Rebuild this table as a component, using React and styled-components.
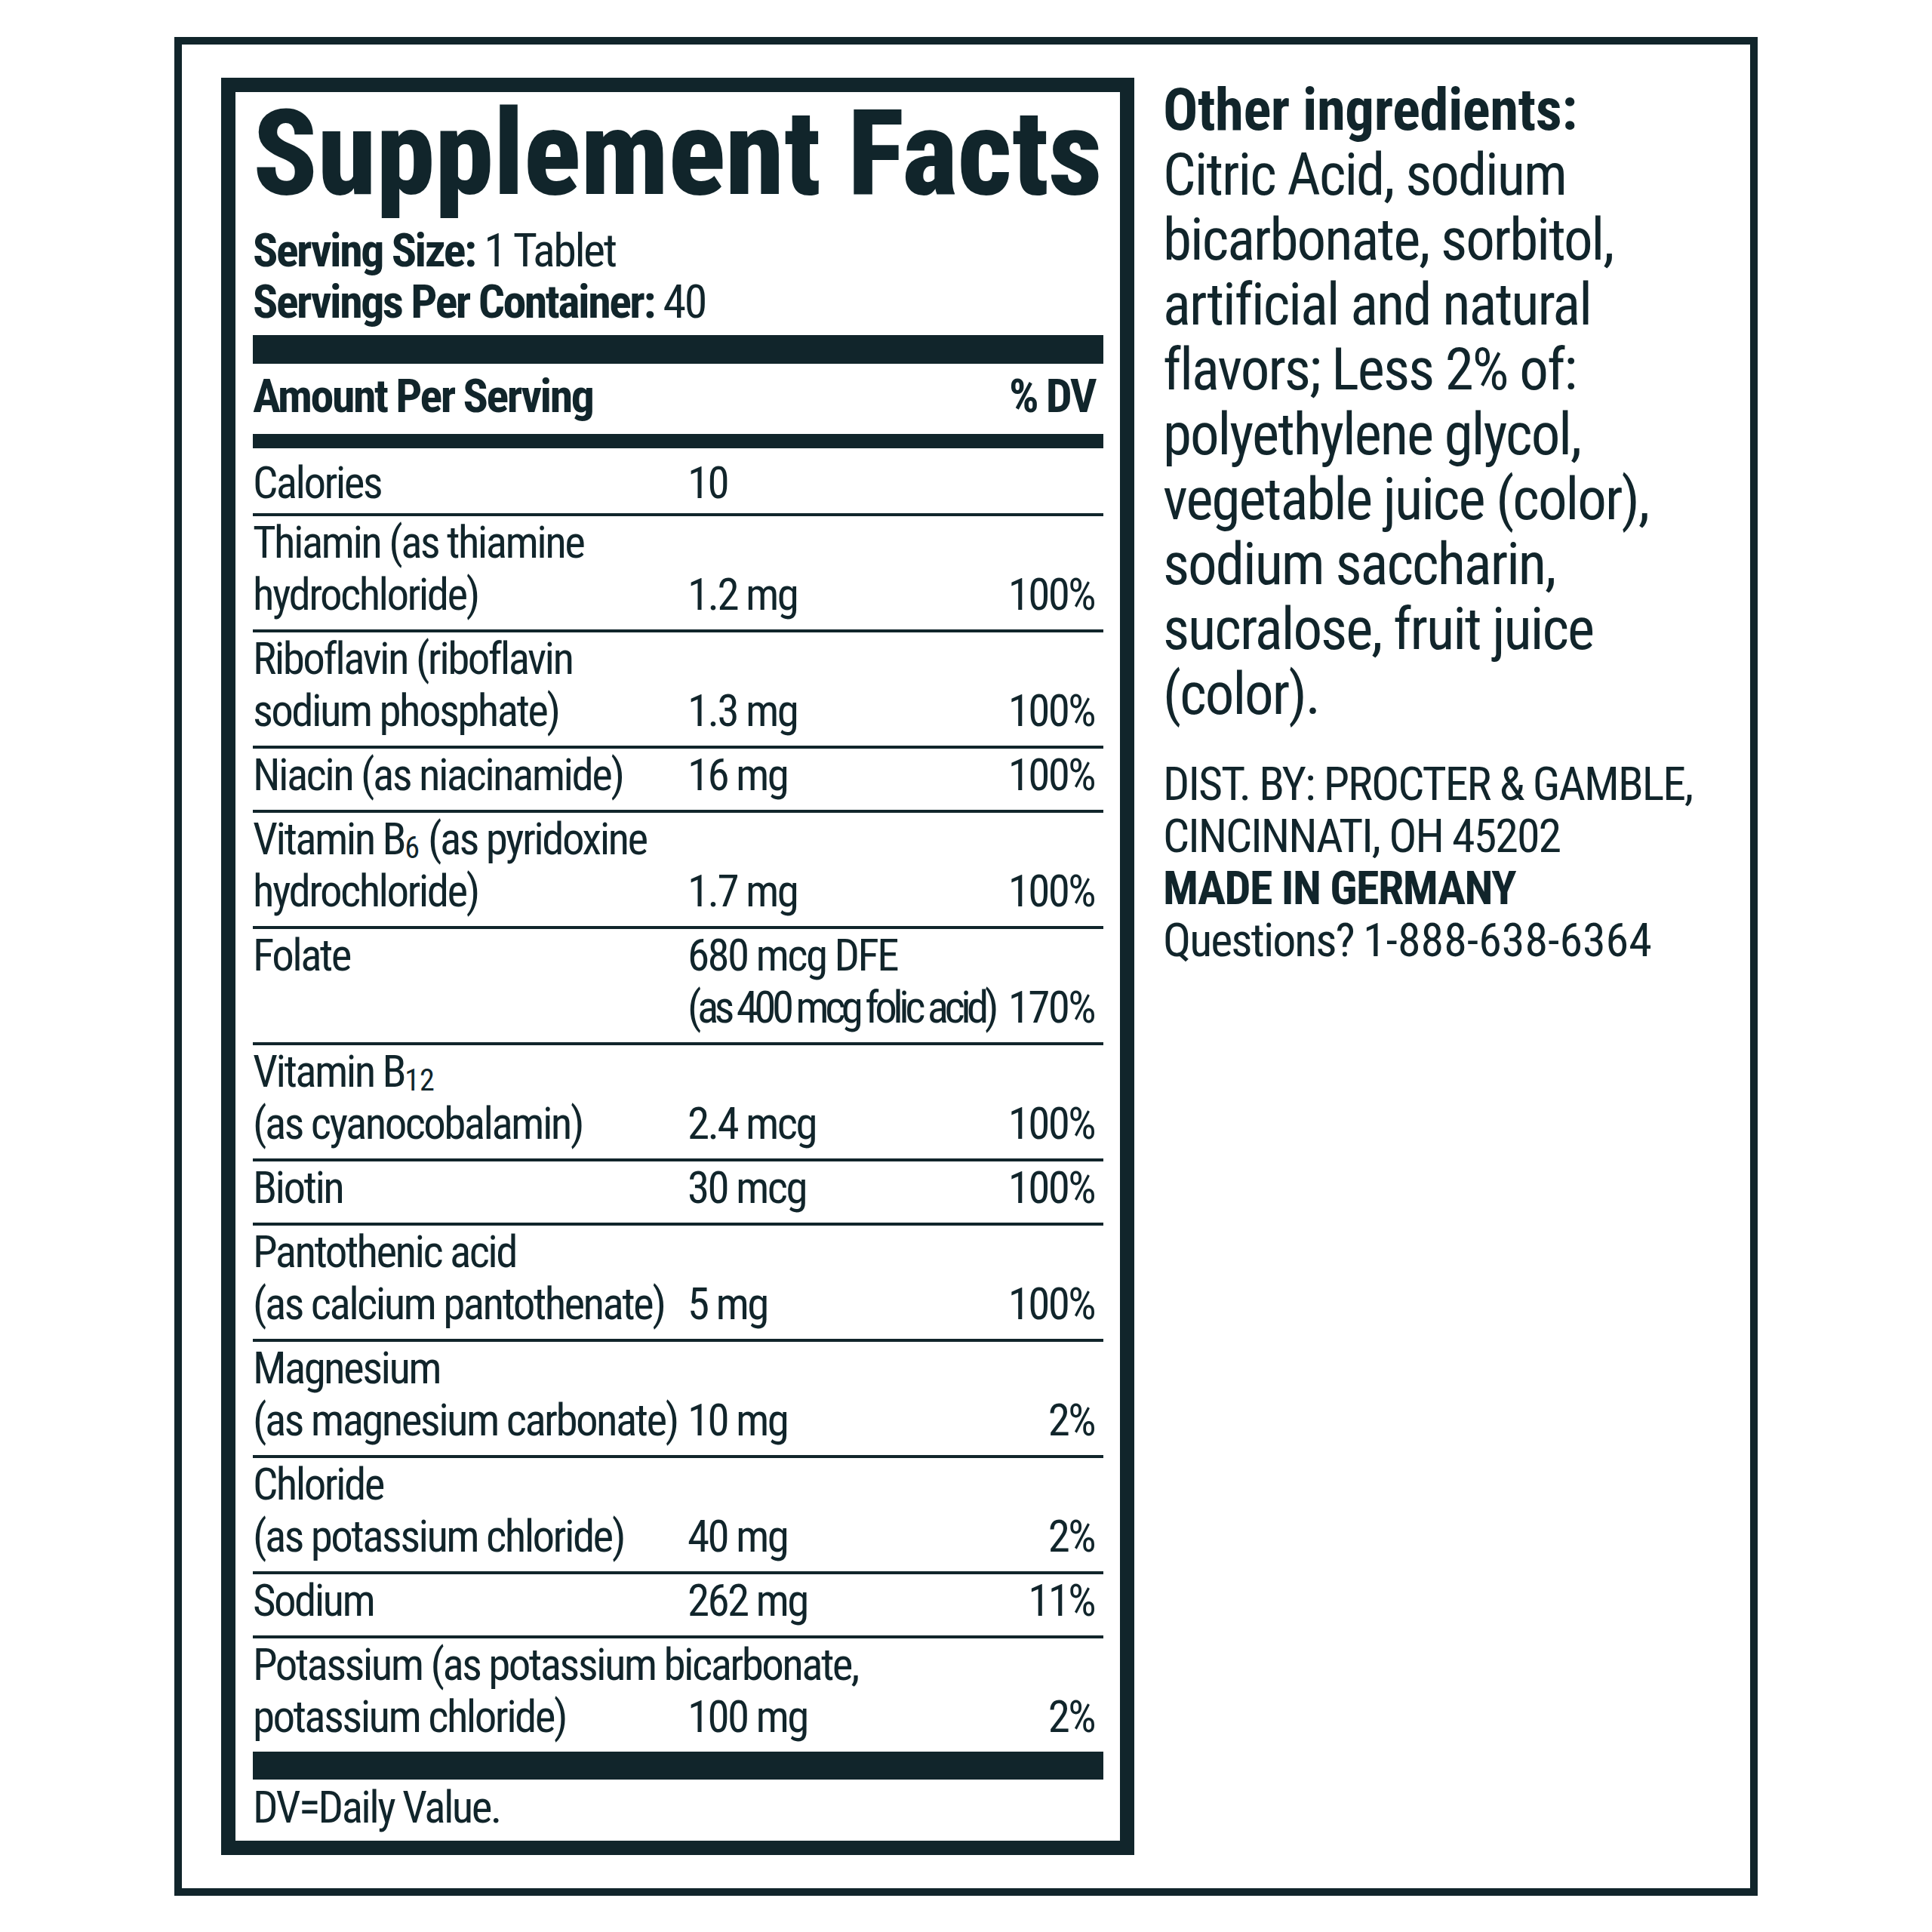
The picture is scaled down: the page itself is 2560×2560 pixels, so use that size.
import React from "react";
import styled, { createGlobalStyle } from "styled-components";

const INK = "#11252b";
const FONT = `Roboto, "Open Sans", "Liberation Sans", sans-serif`;

const nutrients = [
  { name: ["Calories"], amount: ["10"], dv: "" },
  { name: ["Thiamin (as thiamine", "hydrochloride)"], amount: ["1.2 mg"], dv: "100%" },
  { name: ["Riboflavin (riboflavin", "sodium phosphate)"], amount: ["1.3 mg"], dv: "100%" },
  { name: ["Niacin (as niacinamide)"], amount: ["16 mg"], dv: "100%" },
  { name: [{ sub: "6", rest: " (as pyridoxine" }, "hydrochloride)"], amount: ["1.7 mg"], dv: "100%" },
  { name: ["Folate"], amount: ["680 mcg DFE", "(as 400 mcg folic acid)"], dv: "170%", folate: true },
  { name: [{ sub: "12", rest: "" }, "(as cyanocobalamin)"], amount: ["2.4 mcg"], dv: "100%" },
  { name: ["Biotin"], amount: ["30 mcg"], dv: "100%" },
  { name: ["Pantothenic acid", "(as calcium pantothenate)"], amount: ["5 mg"], dv: "100%" },
  { name: ["Magnesium", "(as magnesium carbonate)"], amount: ["10 mg"], dv: "2%" },
  { name: ["Chloride", "(as potassium chloride)"], amount: ["40 mg"], dv: "2%" },
  { name: ["Sodium"], amount: ["262 mg"], dv: "11%" },
  { name: ["Potassium (as potassium bicarbonate,", "potassium chloride)"], amount: ["100 mg"], dv: "2%" },
];

const ingredients = [
  "Citric Acid, sodium",
  "bicarbonate, sorbitol,",
  "artificial and natural",
  "flavors; Less 2% of:",
  "polyethylene glycol,",
  "vegetable juice (color),",
  "sodium saccharin,",
  "sucralose, fruit juice",
  "(color).",
];

function NameLine({ line }) {
  if (typeof line === "string") return <Line>{line}</Line>;
  return (
    <Line>
      Vitamin B<SubText>{line.sub}</SubText>
      {line.rest}
    </Line>
  );
}

export default function App() {
  return (
    <>
      <GlobalStyle />
      <Page>
        <Frame>
          <FactsPanel>
            <Title>Supplement Facts</Title>
            <ServingBlock>
              <ServingLine>
                <b>Serving Size:</b> 1 Tablet
              </ServingLine>
              <ServingLine>
                <b>Servings Per Container:</b> 40
              </ServingLine>
            </ServingBlock>
            <Bar $h={38} />
            <HeaderRow>
              <span>Amount Per Serving</span>
              <span>% DV</span>
            </HeaderRow>
            <Bar $h={19} />
            <Rows>
              {nutrients.map((n, i) => (
                <Row key={i} $first={i === 0} $last={i === nutrients.length - 1}>
                  <NameCell>
                    {n.name.map((l, j) => (
                      <NameLine key={j} line={l} />
                    ))}
                  </NameCell>
                  <AmountCell>
                    {n.amount.map((l, j) => (
                      <Line key={j} $tight={n.folate && j === 1}>
                        {l}
                      </Line>
                    ))}
                  </AmountCell>
                  <DvCell>{n.dv}</DvCell>
                </Row>
              ))}
            </Rows>
            <Bar $h={37} />
            <Footnote>DV=Daily Value.</Footnote>
          </FactsPanel>
          <Aside>
            <Ingredients>
              <IngredientsHead>Other ingredients:</IngredientsHead>
              {ingredients.map((l) => (
                <Line key={l}>{l}</Line>
              ))}
            </Ingredients>
            <Distributor>
              <Line>DIST. BY: PROCTER &amp; GAMBLE,</Line>
              <Line>CINCINNATI, OH 45202</Line>
              <Line as="strong">MADE IN GERMANY</Line>
              <Line>
                Questions? <Phone>1-888-638-6364</Phone>
              </Line>
            </Distributor>
          </Aside>
        </Frame>
      </Page>
    </>
  );
}

const GlobalStyle = createGlobalStyle`
  html, body {
    margin: 0;
    background: #fff;
  }
  body {
    font-family: ${FONT};
    font-stretch: 75%;
    color: ${INK};
  }
`;

const Page = styled.div`
  padding: 49px 0 0 231px;
`;

const Frame = styled.div`
  box-sizing: border-box;
  width: 2098px;
  height: 2463px;
  border: 10px solid ${INK};
  padding: 44px 0 0 52px;
  display: flex;
  align-items: flex-start;
  gap: 38px;
`;

const FactsPanel = styled.section`
  box-sizing: border-box;
  width: 1210px;
  border: 19px solid ${INK};
  padding: 0 22px 10px 23px;
`;

const Title = styled.h1`
  margin: 2px 0 0;
  font-size: 158px;
  line-height: 158px;
  font-weight: 800;
  letter-spacing: -0.5px;
  white-space: nowrap;
`;

const ServingBlock = styled.div`
  margin-top: 16px;
  padding-bottom: 10px;
`;

const ServingLine = styled.div`
  font-size: 62px;
  line-height: 68px;
  letter-spacing: -2.5px;
  b {
    font-weight: 700;
  }
`;

const Bar = styled.div`
  height: ${({ $h }) => $h}px;
  background: ${INK};
`;

const HeaderRow = styled.div`
  display: flex;
  justify-content: space-between;
  padding: 9px 11px 16px 0;
  font-size: 62px;
  line-height: 68px;
  font-weight: 700;
  letter-spacing: -2.5px;
`;

const Rows = styled.div`
  padding-top: 11px;
`;

const Row = styled.div`
  display: grid;
  grid-template-columns: 576px minmax(0, 1fr) auto;
  padding: 0 12px ${({ $first }) => ($first ? 6 : 12)}px 0;
  border-bottom: ${({ $last }) => ($last ? "none" : `4px solid ${INK}`)};
  font-size: 59px;
  line-height: 69px;
  letter-spacing: -2.6px;
`;

const NameCell = styled.div`
  white-space: nowrap;
`;

const AmountCell = styled.div`
  align-self: end;
  white-space: nowrap;
`;

const DvCell = styled.div`
  align-self: end;
  text-align: right;
  white-space: nowrap;
`;

const Line = styled.div`
  display: block;
  white-space: nowrap;
  font-weight: inherit;
  letter-spacing: ${({ $tight }) => ($tight ? "-5.6px" : "inherit")};
`;

const SubText = styled.span`
  font-size: 0.68em;
  line-height: 0;
  position: relative;
  top: 0.12em;
  letter-spacing: 0;
`;

const Footnote = styled.div`
  padding-top: 2px;
  font-size: 59px;
  line-height: 69px;
  letter-spacing: -2.6px;
`;

const Aside = styled.aside`
  display: flex;
  flex-direction: column;
`;

const Ingredients = styled.div`
  font-size: 77px;
  line-height: 86px;
  letter-spacing: -2px;
`;

const IngredientsHead = styled.div`
  font-weight: 700;
  letter-spacing: -0.5px;
`;

const Distributor = styled.div`
  margin-top: 41px;
  font-size: 62px;
  line-height: 69px;
  letter-spacing: -2px;
  strong {
    font-weight: 700;
    letter-spacing: -1.5px;
  }
`;

const Phone = styled.span`
  letter-spacing: 0;
`;
